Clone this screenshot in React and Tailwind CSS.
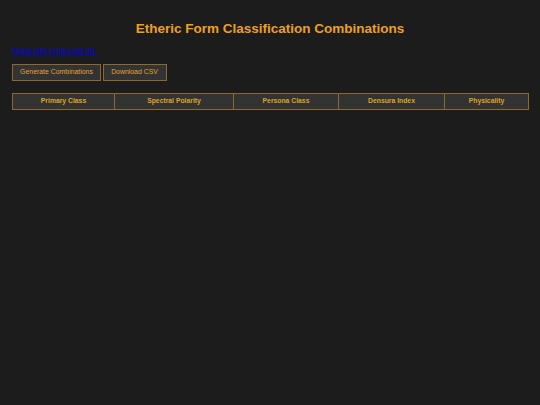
export default function App() {
  const cols = [
    ["Primary Class", "w-[102px]"],
    ["Spectral Polarity", "w-[119px]"],
    ["Persona Class", "w-[105px]"],
    ["Densura Index", "w-[106px]"],
    ["Physicality", "w-[84px]"],
  ];
  return (
    <div className="min-h-[405px] bg-[#1c1c1c] px-[12px] pt-[21px] font-['Liberation_Sans',Arial,sans-serif]">
      <h1 className="text-center text-[13.5px] leading-[16px] font-bold text-[#eca022]">
        Etheric Form Classification Combinations
      </h1>
      <a href="#" className="mt-[10px] block w-fit text-[6.7px] leading-[7px] text-[#0000ee] underline">
        Please refer to this class list.
      </a>
      <div className="mt-[10px] flex gap-[1.5px]">
        <button className="h-[17px] w-[89px] border border-[#8a6a2e] bg-[#333333] text-[6.9px] text-[#e8a030]">
          Generate Combinations
        </button>
        <button className="h-[17px] w-[64px] border border-[#8a6a2e] bg-[#333333] text-[6.9px] text-[#e8a030]">
          Download CSV
        </button>
      </div>
      <table className="mt-[11.5px] w-[516px] table-fixed border-collapse">
        <thead>
          <tr>
            {cols.map(([c, w]) => (
              <th
                key={c}
                className={`${w} h-[16px] border border-[#8a6a2e] bg-[#333333] p-0 text-center text-[6.8px] font-bold text-[#dca422]`}
              >
                {c}
              </th>
            ))}
          </tr>
        </thead>
      </table>
    </div>
  );
}
